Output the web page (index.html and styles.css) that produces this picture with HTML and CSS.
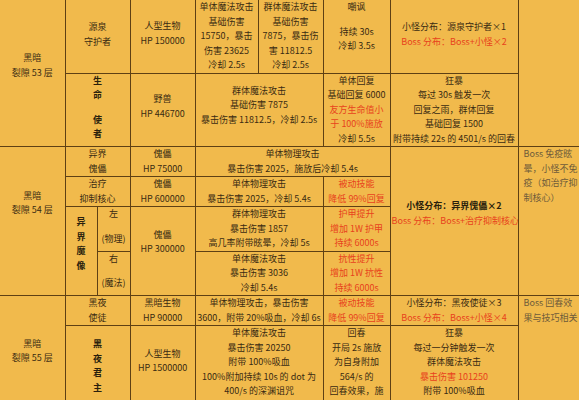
FILE: index.html
```html
<!DOCTYPE html>
<html lang="zh-CN">
<head>
<meta charset="utf-8">
<title>黑暗裂隙</title>
<link rel="stylesheet" href="styles.css">
</head>
<body>
<div class="wrap">
<table class="grid">
<colgroup>
<col class="c-a"><col class="c-b1"><col class="c-b2"><col class="c-c"><col class="c-d"><col class="c-e"><col class="c-f"><col class="c-g"><col class="c-h">
</colgroup>
<tbody>
<tr class="r73">
  <td rowspan="2" class="pb15">黑暗<br>裂隙 53 层</td>
  <td colspan="2" class="pb3">源泉<br>守护者</td>
  <td class="pb5">人型生物<br>HP 150000</td>
  <td>单体魔法攻击<br>基础伤害<br>15750，暴击<br>伤害 23625<br>冷却 2.5s</td>
  <td>群体魔法攻击<br>基础伤害<br>7875，暴击伤<br>害 11812.5<br>冷却 2.5s</td>
  <td class="top"><div>嘲讽</div><div class="gap">持续 30s<br>冷却 3.5s</div></td>
  <td class="pb3">小怪分布：源泉守护者×1<br><span class="red">Boss 分布：Boss+小怪×2</span></td>
  <td rowspan="2" class="note"></td>
</tr>
<tr class="r73">
  <td colspan="2" class="top bold"><div>生<br>命</div><div class="gap">使<br>者</div></td>
  <td class="pb6">野兽<br>HP 446700</td>
  <td colspan="2" class="pb9">群体魔法攻击<br>基础伤害 7875<br>暴击伤害 11812.5，冷却 2.5s</td>
  <td>单体回复<br>基础回复 6000<br><span class="red">友方生命值小<br>于 100%施放</span><br>冷却 5.5s</td>
  <td>狂暴<br>每过 30s 触发一次<br>回复之雨，群体回复<br>基础回复 1500<br>附带持续 22s 的 4501/s 的回春</td>
</tr>
<tr class="r30">
  <td rowspan="4" class="pb36">黑暗<br>裂隙 54 层</td>
  <td colspan="2">异界<br>傀儡</td>
  <td>傀儡<br>HP 75000</td>
  <td colspan="3">单体物理攻击<br>暴击伤害 2025，施放后冷却 5.4s</td>
  <td rowspan="4" class="pb15"><span class="bold">小怪分布：异界傀儡×2</span><br><span class="red">Boss 分布：Boss+治疗抑制核心</span></td>
  <td rowspan="4" class="note">Boss 免疫眩<br>晕，小怪不免<br>疫（如治疗抑<br>制核心）</td>
</tr>
<tr class="r30">
  <td colspan="2">治疗<br>抑制核心</td>
  <td>傀儡<br>HP 600000</td>
  <td colspan="2">单体物理攻击<br>暴击伤害 2025，冷却 5.4s</td>
  <td class="red">被动技能<br>降低 99%回复</td>
</tr>
<tr class="r44">
  <td rowspan="2" class="bold pb14">异<br>界<br>魔<br>像</td>
  <td class="top"><div>左</div><div class="gap">(物理)</div></td>
  <td rowspan="2" class="pb18">傀儡<br>HP 300000</td>
  <td colspan="2">群体物理攻击<br>暴击伤害 1857<br>高几率附带眩晕，冷却 5s</td>
  <td class="red">护甲提升<br>增加 1W 护甲<br>持续 6000s</td>
</tr>
<tr class="r43">
  <td class="top"><div>右</div><div class="gap">(魔法)</div></td>
  <td colspan="2">单体魔法攻击<br>暴击伤害 3036<br>冷却 5.4s</td>
  <td class="red">抗性提升<br>增加 1W 抗性<br>持续 6000s</td>
</tr>
<tr class="r30">
  <td rowspan="2">黑暗<br>裂隙 55 层</td>
  <td colspan="2">黑夜<br>使徒</td>
  <td>黑暗生物<br>HP 90000</td>
  <td colspan="2">单体物理攻击，暴击伤害<br>3600，附带 20%吸血，冷却 6s</td>
  <td class="red">被动技能<br>降低 99%回复</td>
  <td>小怪分布：黑夜使徒×3<br><span class="red">Boss 分布：Boss+小怪×4</span></td>
  <td rowspan="2" class="note">Boss 回春效<br>果与技巧相关</td>
</tr>
<tr class="r81">
  <td colspan="2" class="bold">黑<br>夜<br>君<br>主</td>
  <td class="pb10">人型生物<br>HP 1500000</td>
  <td colspan="2" class="top">单体魔法攻击<br>暴击伤害 20250<br>附带 100%吸血<br>100%附加持续 10s 的 dot 为<br>400/s 的深渊诅咒</td>
  <td class="top">回春<br>开局 2s 施放<br>为自身附加<br>564/s 的<br>回春效果，施</td>
  <td class="top">狂暴<br>每过一分钟触发一次<br>群体魔法攻击<br><span class="red">暴击伤害 101250</span><br>附带 100%吸血</td>
</tr>
</tbody>
</table>
</div>
</body>
</html>
```
FILE: styles.css
```css
html, body {
  margin: 0;
  padding: 0;
  background: #f1ba4c;
}
body {
  font-family: "Noto Sans CJK SC", "Noto Sans", sans-serif;
  font-size: 9px;
  line-height: 14.5px;
  color: #3a2b12;
}
.wrap {
  width: 579px;
  height: 400px;
  overflow: hidden;
}
.grid {
  border-collapse: collapse;
  border: hidden;
  table-layout: fixed;
  width: 579px;
}
.grid td {
  border: 1px solid #5e4014;
  padding: 0 1px;
  text-align: center;
  vertical-align: middle;
  white-space: nowrap;
  overflow: hidden;
}
.c-a { width: 65px; }
.c-b1 { width: 32px; }
.c-b2 { width: 33px; }
.c-c { width: 65px; }
.c-d { width: 63px; }
.c-e { width: 65px; }
.c-f { width: 67px; }
.c-g { width: 128px; }
.c-h { width: 61px; }

.r73 { height: 73px; }
.r30 { height: 30px; }
.r44 { height: 44px; }
.r43 { height: 43px; }
.r81 { height: 81px; }

.grid td.top { vertical-align: top; }
.grid td.note {
  vertical-align: top;
  text-align: left;
  padding-left: 5px;
  color: #6e5a3a;
}
.gap { margin-top: 10px; }
.bold { font-weight: 700; color: #2a1f0c; }
.red { color: #e8421c; }

.pb3 { padding-bottom: 3px; }
.grid td.pb3 { padding-bottom: 3px; }
.grid td.pb5 { padding-bottom: 5px; }
.grid td.pb6 { padding-bottom: 6px; }
.grid td.pb9 { padding-bottom: 9px; }
.grid td.pb10 { padding-bottom: 10px; }
.grid td.pb14 { padding-bottom: 14px; }
.grid td.pb15 { padding-bottom: 15px; }
.grid td.pb18 { padding-bottom: 18px; }
.grid td.pb36 { padding-bottom: 36px; }
```
